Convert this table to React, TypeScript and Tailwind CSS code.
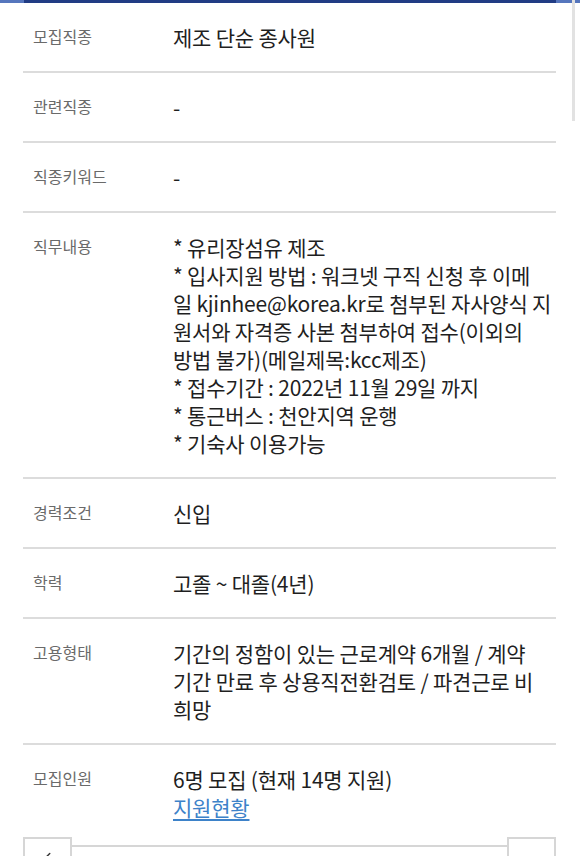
import { ChevronLeft } from "lucide-react";

const font = { fontFamily: "'Noto Sans CJK KR', 'Noto Sans', sans-serif" } as const;

type Item = { label: string; lines: string[]; link?: string };

const ROWS: Item[] = [
  { label: "모집직종", lines: ["제조 단순 종사원"] },
  { label: "관련직종", lines: ["-"] },
  { label: "직종키워드", lines: ["-"] },
  {
    label: "직무내용",
    lines: [
      "* 유리장섬유 제조",
      "* 입사지원 방법 : 워크넷 구직 신청 후 이메",
      "일 kjinhee@korea.kr로 첨부된 자사양식 지",
      "원서와 자격증 사본 첨부하여 접수(이외의",
      "방법 불가)(메일제목:kcc제조)",
      "* 접수기간 : 2022년 11월 29일 까지",
      "* 통근버스 : 천안지역 운행",
      "* 기숙사 이용가능",
    ],
  },
  { label: "경력조건", lines: ["신입"] },
  { label: "학력", lines: ["고졸 ~ 대졸(4년)"] },
  {
    label: "고용형태",
    lines: [
      "기간의 정함이 있는 근로계약 6개월 / 계약",
      "기간 만료 후 상용직전환검토 / 파견근로 비",
      "희망",
    ],
  },
];

function InfoRow({ item, last }: { item: Item; last?: boolean }) {
  return (
    <div className={`flex pl-[10px] pt-[20px] ${last ? "pb-[16px]" : "pb-[20px] border-b-2 border-[#dcdcdc]"}`}>
      <div className="w-[140px] shrink-0 text-[16px] leading-[26px] text-[#6a6a6a]">{item.label}</div>
      <div className="flex-1 text-[21px] leading-[28px] text-[#1f1f1f] tracking-[-0.2px] whitespace-nowrap">
        {item.lines.map((l, i) => (
          <div key={i}>{l}</div>
        ))}
        {item.link && <a className="text-[#3d82c9] underline underline-offset-[3px]">{item.link}</a>}
      </div>
    </div>
  );
}

export default function App() {
  return (
    <div className="w-[580px] h-[856px] overflow-hidden bg-white relative" style={font}>
      <div className="h-[3px] bg-[#5676bd]">
        <div className="mx-[24px] h-[3px] bg-[#213c84]" />
      </div>

      {/* scrollbar thumb */}
      <div className="absolute right-[5px] top-0 w-[3px] h-[121px] bg-[#e2e2e2]" />

      <div className="mx-[23px] w-[533px]">
        {ROWS.map((r) => (
          <InfoRow key={r.label} item={r} />
        ))}
        <InfoRow item={{ label: "모집인원", lines: ["6명 모집 (현재 14명 지원)"], link: "지원현황" }} last />

        <div className="flex items-start">
          <div className="w-[49px] h-[30px] border-2 border-[#d6d6d6] flex justify-center pt-[11px] shrink-0">
            <ChevronLeft className="w-[14px] h-[14px] text-[#333]" strokeWidth={2.5} />
          </div>
          <div className="flex-1 mt-[8px] border-t-2 border-[#d6d6d6]" />
          <div className="w-[49px] h-[30px] border-2 border-[#d6d6d6] shrink-0" />
        </div>
      </div>
    </div>
  );
}
